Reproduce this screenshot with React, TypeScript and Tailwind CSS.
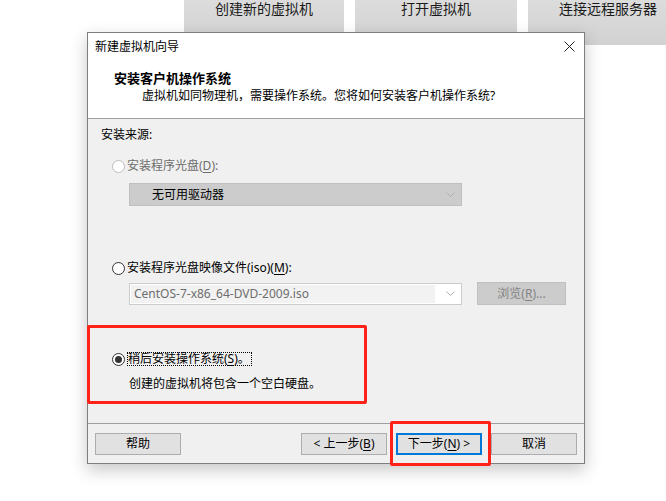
import React from "react";

const font = {
  fontFamily: '"Noto Sans", "Noto Sans CJK SC", sans-serif',
};

const Radio = ({ checked, disabled }: { checked?: boolean; disabled?: boolean }) => (
  <span
    className={`flex items-center justify-center w-[13px] h-[13px] rounded-full bg-white border ${
      disabled ? "border-[#bcbcbc]" : "border-[#333333]"
    }`}
  >
    {checked && <span className="block w-[7px] h-[7px] rounded-full bg-[#333333]" />}
  </span>
);

const Chevron = () => (
  <svg width="9" height="5" viewBox="0 0 9 5" className="shrink-0">
    <path d="M0.5 0.5 L4.5 4.5 L8.5 0.5" fill="none" stroke="#b0b0b0" strokeWidth="1" />
  </svg>
);

const Key = ({ k }: { k: string }) => <span className="underline underline-offset-2">{k}</span>;

const TopButton = ({ label, w }: { label: string; w: string }) => (
  <div className={`${w} h-[45px] shrink-0 bg-gradient-to-b from-[#dcdcdc] to-[#d2d2d2] flex justify-center pt-[1px]`}>
    <span className="text-[14px] leading-[16px] text-[#1a1a1a]">{label}</span>
  </div>
);

const WinButton = ({ children, primary }: { children: React.ReactNode; primary?: boolean }) => (
  <button
    className={`w-[86px] h-[22px] flex items-center justify-center bg-[#e1e1e1] text-[12px] leading-[14px] text-black ${
      primary ? "border-2 border-[#0078d7]" : "border border-[#adadad]"
    }`}
  >
    {children}
  </button>
);

export default function App() {
  return (
    <div className="relative w-[666px] h-[501px] bg-white overflow-hidden" style={font}>
      {/* launcher buttons behind the dialog */}
      <div className="flex pl-[184px] gap-[11px]">
        <TopButton label="创建新的虚拟机" w="w-[160px]" />
        <TopButton label="打开虚拟机" w="w-[162px]" />
        <TopButton label="连接远程服务器" w="w-[160px]" />
      </div>

      {/* wizard window */}
      <div className="absolute left-[87px] top-[32px] w-[498px] h-[432px] border border-[#7e7e7e] bg-[#f0f0f0] flex flex-col shadow-[0_6px_16px_rgba(0,0,0,0.22)]">
        <div className="h-[27px] bg-white flex items-center justify-between pl-[7px] pr-[9px]">
          <span className="text-[12px] leading-[14px] text-black">新建虚拟机向导</span>
          <svg width="11" height="11" viewBox="0 0 11 11">
            <path d="M0.5 0.5 L10.5 10.5 M10.5 0.5 L0.5 10.5" stroke="#222" strokeWidth="1" />
          </svg>
        </div>
        <div className="h-[59px] bg-white border-b border-[#a0a0a0] pl-[26px] pt-[10px]">
          <div className="text-[13px] leading-[16px] font-bold text-black">安装客户机操作系统</div>
          <div className="mt-[2px] pl-[28px] text-[12px] leading-[16px] text-black">
            虚拟机如同物理机，需要操作系统。您将如何安装客户机操作系统?
          </div>
        </div>

        <div className="h-[305px] border-b border-[#a0a0a0] flex flex-col text-[12px] leading-[16px]">
          <div className="mt-[8px] h-[16px] pl-[13px] text-black">安装来源:</div>

          <div className="mt-[15px] h-[16px] pl-[24px] flex items-center gap-[2px] text-[#6d6d6d]">
            <Radio disabled />
            <span>
              安装程序光盘(<Key k="D" />):
            </span>
          </div>

          <div className="mt-[9px] ml-[41px] w-[333px] h-[23px] bg-[#cccccc] border border-[#bfbfbf] flex items-center justify-between pl-[22px] pr-[6px]">
            <span className="text-black">无可用驱动器</span>
            <Chevron />
          </div>

          <div className="mt-[54px] h-[16px] pl-[24px] flex items-center gap-[2px] text-black">
            <Radio />
            <span>
              安装程序光盘映像文件(iso)(<Key k="M" />):
            </span>
          </div>

          <div className="mt-[6px] ml-[41px] h-[23px] flex items-center gap-[15px]">
            <div className="w-[333px] h-[22px] bg-white border border-[#cccccc] flex items-center p-[1px] pr-[6px]">
              <div className="flex-1 h-full bg-[#f2f2f2] flex items-center pl-[3px] text-[#6d6d6d]">
                CentOS-7-x86_64-DVD-2009.iso
              </div>
              <div className="w-[20px] flex justify-end">
                <Chevron />
              </div>
            </div>
            <div className="w-[89px] h-[23px] bg-[#cccccc] border border-[#bfbfbf] flex items-center justify-center text-[#838383]">
              浏览(<Key k="R" />)...
            </div>
          </div>

          <div className="mt-[46px] h-[16px] pl-[24px] flex items-center gap-[2px] text-black">
            <Radio checked />
            <span className="border border-dotted border-black leading-[12px] pr-[1px]">
              稍后安装操作系统(<Key k="S" />)。
            </span>
          </div>

          <div className="mt-[9px] h-[16px] pl-[41px] text-black">创建的虚拟机将包含一个空白硬盘。</div>
        </div>

        <div className="flex-1 flex items-start justify-between pt-[9px] pl-[7px] pr-[7px]">
          <WinButton>帮助</WinButton>
          <div className="flex gap-[9px]">
            <WinButton>
              &lt; 上一步(<Key k="B" />)
            </WinButton>
            <WinButton primary>
              下一步(<Key k="N" />) &gt;
            </WinButton>
            <WinButton>取消</WinButton>
          </div>
        </div>
      </div>

      {/* red annotation boxes */}
      <div className="absolute left-[87px] top-[325px] w-[280px] h-[79px] border-[3px] border-[#ff2219] rounded-[2px]" />
      <div className="absolute left-[390px] top-[421px] w-[101px] h-[45px] border-[3px] border-[#ff2219] rounded-[2px]" />
    </div>
  );
}
